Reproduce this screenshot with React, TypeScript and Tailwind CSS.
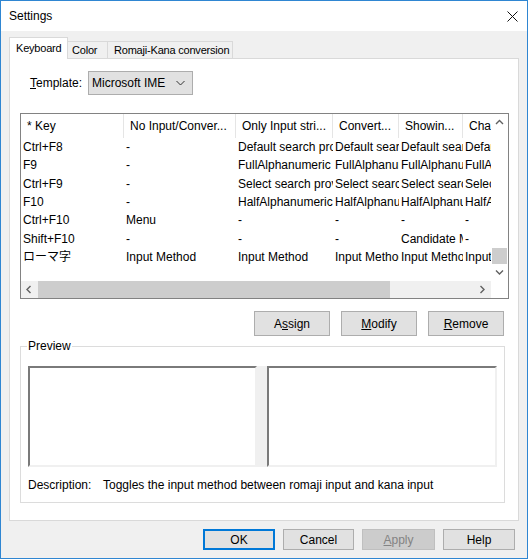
import React from 'react';

const columns = [
  { title: '* Key', width: 'w-[103px]' },
  { title: 'No Input/Conver...', width: 'w-[112px]' },
  { title: 'Only Input stri...', width: 'w-[97px]' },
  { title: 'Convert...', width: 'w-[66px]' },
  { title: 'Showin...', width: 'w-[64px]' },
  { title: 'Character...', width: 'w-[80px]' },
];

const rows: string[][] = [
  ['Ctrl+F8', '-', 'Default search provider', 'Default search provider', 'Default search provider', 'Default search provider'],
  ['F9', '-', 'FullAlphanumeric', 'FullAlphanumeric', 'FullAlphanumeric', 'FullAlphanumeric'],
  ['Ctrl+F9', '-', 'Select search provider', 'Select search provider', 'Select search provider', 'Select search provider'],
  ['F10', '-', 'HalfAlphanumeric', 'HalfAlphanumeric', 'HalfAlphanumeric', 'HalfAlphanumeric'],
  ['Ctrl+F10', 'Menu', '-', '-', '-', '-'],
  ['Shift+F10', '-', '-', '-', 'Candidate Menu', '-'],
  ['ローマ字', 'Input Method', 'Input Method', 'Input Method', 'Input Method', 'Input Method'],
];

function Chevron({ dir }: { dir: 'up' | 'down' | 'left' | 'right' }) {
  const d = {
    up: 'M1 5 L4.5 1.5 L8 5',
    down: 'M1 1.5 L4.5 5 L8 1.5',
    left: 'M5.5 1 L2 4.5 L5.5 8',
    right: 'M2.5 1 L6 4.5 L2.5 8',
  }[dir];
  const vertical = dir === 'up' || dir === 'down';
  return (
    <svg width="9" height={vertical ? 7 : 9} viewBox={vertical ? '0 0 9 7' : '0 0 9 9'}>
      <path d={d} fill="none" stroke="#606060" strokeWidth="1.4" />
    </svg>
  );
}

function Button({ children }: { children: React.ReactNode }) {
  return (
    <div className="w-[76px] h-[25px] flex items-center justify-center border border-[#adadad] bg-[#e1e1e1]">
      {children}
    </div>
  );
}

export default function App() {
  return (
    <div className="w-[528px] h-[559px] border border-[#2f86d2] bg-[#f0f0f0] flex flex-col text-[12px] leading-[14px] text-black font-['Liberation_Sans',Arial,sans-serif]">
      {/* title bar */}
      <div className="h-[30px] shrink-0 bg-white flex items-center justify-between pl-2">
        <span>Settings</span>
        <svg width="11" height="11" viewBox="0 0 11 11" className="mr-[9px]">
          <path d="M0.5 0.5 L10.5 10.5 M10.5 0.5 L0.5 10.5" stroke="#111" strokeWidth="1" />
        </svg>
      </div>

      {/* tabs */}
      <div className="mt-[6px] ml-[8px] flex items-end h-[21px] text-[11px] tracking-[-0.2px] whitespace-nowrap">
        <div className="relative z-10 w-[59px] h-[22px] -mb-px bg-white border border-b-0 border-[#d9d9d9] flex items-center pl-[6px] pb-[1px]">
          Keyboard
        </div>
        <div className="w-[40px] h-[17px] border border-l-0 border-b-0 border-[#d9d9d9] flex items-center pl-[4px]">
          Color
        </div>
        <div className="w-[125px] h-[17px] border border-l-0 border-b-0 border-[#d9d9d9] flex items-center pl-[6px]">
          Romaji-Kana conversion
        </div>
      </div>

      {/* tab panel */}
      <div className="mx-[8px] h-[463px] bg-white border border-[#d9d9d9] flex flex-col">
        <div className="mt-[12px] pl-[20px] flex items-center">
          <span className="w-[58px]">
            <span className="underline">T</span>emplate:
          </span>
          <div className="w-[105px] h-[24px] border border-[#adadad] bg-[#e1e1e1] flex items-center justify-between pl-[3px] pr-[7px]">
            <span>Microsoft IME</span>
            <svg width="9" height="6" viewBox="0 0 9 6">
              <path d="M0.5 1 L4.5 5 L8.5 1" fill="none" stroke="#333" strokeWidth="1" />
            </svg>
          </div>
        </div>

        {/* list view */}
        <div className="mt-[18px] ml-[10px] w-[489px] h-[186px] border border-[#828282] flex flex-col">
          <div className="flex h-[167px]">
            <div className="flex-1 overflow-hidden bg-white">
              <div className="flex h-[24px]">
                {columns.map((c, i) => (
                  <div
                    key={i}
                    className={`${c.width} shrink-0 h-full border-r border-[#e5e5e5] flex items-center pl-[6px] overflow-hidden whitespace-nowrap`}
                  >
                    {c.title}
                  </div>
                ))}
              </div>
              {rows.map((r, ri) => (
                <div key={ri} className="flex h-[18.3px] items-center">
                  {r.map((cell, ci) => (
                    <div
                      key={ci}
                      className={`${columns[ci].width} shrink-0 pl-[2px] overflow-hidden whitespace-nowrap font-['Liberation_Sans','Noto_Sans_CJK_JP',sans-serif]`}
                    >
                      {cell}
                    </div>
                  ))}
                </div>
              ))}
            </div>
            {/* vertical scrollbar */}
            <div className="w-[17px] flex flex-col bg-white">
              <div className="h-[17px] flex items-center justify-center">
                <Chevron dir="up" />
              </div>
              <div className="flex-1 flex flex-col justify-end">
                <div className="h-[16px] mx-[1px] bg-[#cdcdcd]" />
              </div>
              <div className="h-[17px] flex items-center justify-center">
                <Chevron dir="down" />
              </div>
            </div>
          </div>
          <div className="flex h-[17px]">
            <div className="flex-1 flex bg-[#f0f0f0]">
              <div className="w-[17px] flex items-center justify-center">
                <Chevron dir="left" />
              </div>
              <div className="w-[352px] bg-[#cdcdcd]" />
              <div className="flex-1" />
              <div className="w-[17px] flex items-center justify-center">
                <Chevron dir="right" />
              </div>
            </div>
            <div className="w-[17px] bg-white" />
          </div>
        </div>

        {/* action buttons */}
        <div className="mt-[12px] pr-[14px] flex justify-end gap-[11px]">
          <Button>
            A<span className="underline">s</span>sign
          </Button>
          <Button>
            <span className="underline">M</span>odify
          </Button>
          <Button>
            <span className="underline">R</span>emove
          </Button>
        </div>

        {/* preview group */}
        <fieldset className="mt-[3px] ml-[10px] w-[485px] border border-[#dcdcdc] pl-[7px] pr-[6px] pb-[10px]">
          <legend className="-ml-[1px] px-[1px] leading-[14px]">Preview</legend>
          <div className="mt-[13px] flex">
            <div className="w-[229px] h-[101px] bg-white border-2 border-t-[#7a7a7a] border-l-[#7a7a7a] border-r-[#f0f0f0] border-b-[#f0f0f0]" />
            <div className="w-[10px] h-[101px] bg-[#f0f0f0]" />
            <div className="w-[230px] h-[101px] bg-white border-2 border-t-[#7a7a7a] border-l-[#7a7a7a] border-r-[#f0f0f0] border-b-[#f0f0f0]" />
          </div>
          <div className="mt-[11px] flex">
            <span className="w-[75px]">Description:</span>
            <span>Toggles the input method between romaji input and kana input</span>
          </div>
        </fieldset>
      </div>

      {/* dialog buttons */}
      <div className="mt-[8px] pr-[12px] flex justify-end gap-[8px]">
        <div className="w-[72px] h-[21px] border-2 border-[#0078d7] bg-[#e1e1e1] flex items-center justify-center">OK</div>
        <div className="w-[71px] h-[21px] border border-[#adadad] bg-[#e1e1e1] flex items-center justify-center">Cancel</div>
        <div className="w-[73px] h-[21px] border border-[#bfbfbf] bg-[#cccccc] text-[#838383] flex items-center justify-center">
          <span className="underline">A</span>pply
        </div>
        <div className="w-[72px] h-[21px] border border-[#adadad] bg-[#e1e1e1] flex items-center justify-center">Help</div>
      </div>
    </div>
  );
}
